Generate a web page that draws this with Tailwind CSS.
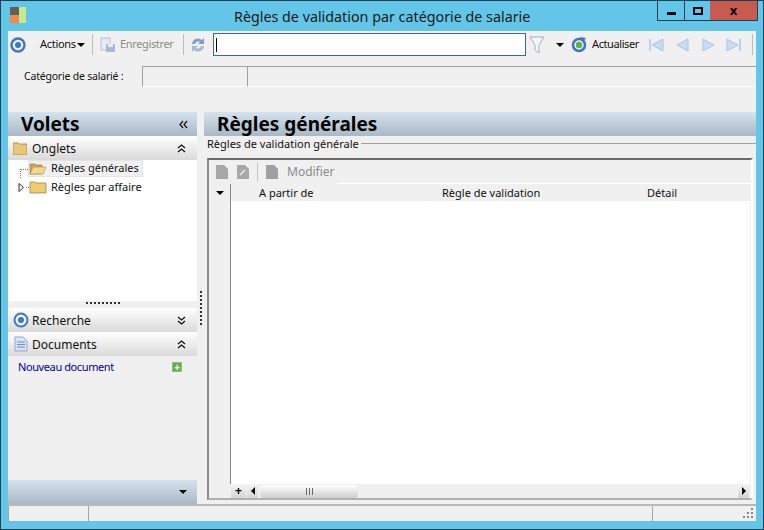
<!DOCTYPE html>
<html lang="fr">
<head>
    <meta charset="UTF-8">
    <title>Règles de validation par catégorie de salarie</title>
    <script src="https://cdn.jsdelivr.net/npm/@tailwindcss/browser@4"></script>
</head>
<body class="m-0 bg-[#63c6e8] font-['Noto_Sans','Open_Sans',sans-serif] text-[#111]">
<div class="w-[764px] h-[530px] flex flex-col border border-[#1d4257] overflow-hidden">

    <!-- title bar -->
    <div class="h-[30px] flex shrink-0 pl-[9px]">
        <svg class="mt-[6px]" width="16" height="16" viewBox="0 0 16 16">
            <rect x="0" y="0" width="9" height="8" fill="#5f5f5f"/>
            <rect x="0" y="8" width="9" height="8" fill="#f28a4e"/>
            <rect x="9" y="0" width="7" height="16" fill="#c4ea8c"/>
        </svg>
        <div class="w-[631px] pl-[208px] text-[14.3px] leading-[30px] pt-px text-[#1a1a1a]">Règles de validation par catégorie de salarie</div>
        <div class="flex h-[21px] -mt-px border border-[#1d4257]">
            <div class="w-[27px] border-r border-[#1d4257] flex items-center justify-center"><div class="w-[9px] h-[3px] mt-[5px] bg-black"></div></div>
            <div class="w-[25px] flex items-center justify-center"><div class="w-[10px] h-[8px] border-2 border-black"></div></div>
            <div class="w-[47px] bg-[#c75b50] flex items-center justify-center text-[13px] font-bold text-black">x</div>
        </div>
    </div>

    <!-- client area -->
    <div class="mx-[7px] w-[748px] h-[490px] bg-[#f0f0f0] flex flex-col text-[11px]">

        <!-- toolbar -->
        <div class="h-[27px] flex items-center pl-[2px] shrink-0">
            <svg width="16" height="16" viewBox="0 0 16 16"><circle cx="8" cy="8" r="6.5" fill="#eef3fb" stroke="#3f76c4" stroke-width="2.4"/><circle cx="8" cy="8" r="3" fill="#3f76c4"/></svg>
            <span class="ml-[14px] w-[34px] tracking-[-0.3px]">Actions</span>
            <span class="ml-[3px] border-x-[4px] border-t-[4px] border-x-transparent border-t-black"></span>
            <span class="ml-[7px] w-px h-[21px] bg-[#bdbdbd]"></span>
            <svg class="ml-[7px]" width="16" height="16" viewBox="0 0 16 16"><rect x="1" y="1" width="9" height="12" fill="#e6ebf3" stroke="#b5c0d0"/><rect x="6" y="7" width="9" height="8" fill="#a9b8d0"/><rect x="8" y="7" width="5" height="3" fill="#e6ebf3"/></svg>
            <span class="ml-[4px] w-[54px] text-[#8a8a8a] tracking-[-0.35px]">Enregistrer</span>
            <span class="ml-[9px] w-px h-[21px] bg-[#bdbdbd]"></span>
            <svg class="ml-[6px]" width="16" height="16" viewBox="0 0 16 16"><path d="M2 7 A6 6 0 0 1 12 3 L14 1 L14 7 L8 7 L10 5 A3.5 3.5 0 0 0 5 7 Z" fill="#7fa0c4"/><path d="M14 9 A6 6 0 0 1 4 13 L2 15 L2 9 L8 9 L6 11 A3.5 3.5 0 0 0 11 9 Z" fill="#a7bbd1"/></svg>
            <div class="ml-[7px] w-[313px] h-[23px] bg-white border border-[#3a6a8c] flex items-center pl-[2px]"><span class="w-px h-[14px] bg-black"></span></div>
            <svg class="ml-[3px]" width="16" height="18" viewBox="0 0 16 18"><path d="M1 1 H15 L10 9 V17 L6 14 V9 Z" fill="#f3f6f9" stroke="#9fb0c0"/></svg>
            <span class="ml-[11px] border-x-[4px] border-t-[4px] border-x-transparent border-t-black"></span>
            <svg class="ml-[7px]" width="16" height="16" viewBox="0 0 16 16"><circle cx="8" cy="8" r="6" fill="none" stroke="#3f76c4" stroke-width="2.6"/><circle cx="8" cy="8" r="3.2" fill="#5bb545"/><path d="M9 0 L15 1 L12 5 Z" fill="#3f76c4"/></svg>
            <span class="ml-[5px] w-[47px] tracking-[-0.4px]">Actualiser</span>
            <svg class="ml-[10px]" width="15" height="14" viewBox="0 0 15 14"><rect x="0" y="1" width="2" height="12" fill="#b9d2ea"/><path d="M14 1 V13 L3 7 Z" fill="#c5dcf1" stroke="#a9c6e2"/></svg>
            <svg class="ml-[12px]" width="14" height="14" viewBox="0 0 14 14"><path d="M12 1 V13 L1 7 Z" fill="#c5dcf1" stroke="#a9c6e2"/></svg>
            <svg class="ml-[11px]" width="14" height="14" viewBox="0 0 14 14"><path d="M2 1 V13 L13 7 Z" fill="#c5dcf1" stroke="#a9c6e2"/></svg>
            <svg class="ml-[11px]" width="15" height="14" viewBox="0 0 15 14"><path d="M1 1 V13 L12 7 Z" fill="#c5dcf1" stroke="#a9c6e2"/><rect x="13" y="1" width="2" height="12" fill="#b9d2ea"/></svg>
            <span class="ml-[11px] w-px h-[21px] bg-[#bdbdbd]"></span>
        </div>

        <!-- category row -->
        <div class="mt-[8px] h-[21px] flex shrink-0">
            <div class="w-[134px] pl-[16px] leading-[21px] text-[10.5px] tracking-[-0.2px]">Catégorie de salarié :</div>
            <div class="w-[105px] border border-r-0 border-t-[#a0a0a0] border-l-[#a0a0a0] border-b-white"></div>
            <div class="flex-1 border border-r-0 border-t-[#a0a0a0] border-l-[#a0a0a0] border-b-white"></div>
        </div>

        <!-- panels -->
        <div class="mt-[25px] flex flex-1 min-h-0 relative">
            <div class="w-[189px] flex flex-col shrink-0">
                <div class="h-[24px] bg-gradient-to-b from-[#d5e3ef] to-[#a9b8c6] flex items-center justify-between pl-[13px] pr-[9px] shrink-0">
                    <span class="text-[19px] font-bold text-black">Volets</span>
                    <svg width="9" height="9" viewBox="0 0 9 9" fill="none" stroke="#111" stroke-width="1.2"><path d="M4 1 L1 4.5 L4 8 M8 1 L5 4.5 L8 8"/></svg>
                </div>
                <div class="h-[24px] bg-gradient-to-b from-[#ffffff] to-[#d9d9d9] flex items-center pl-[5px] pr-[11px] shrink-0 text-[12px]">
                    <svg width="14" height="13" viewBox="0 0 14 13"><path d="M0 1 H5 L6 2 H14 V13 H0 Z" fill="#e9c878" stroke="#8f7a4a" stroke-width="0.7"/></svg>
                    <span class="ml-[5px] pt-[2px]">Onglets</span>
                    <svg class="ml-auto" width="9" height="9" viewBox="0 0 9 9" fill="none" stroke="#111" stroke-width="1.3"><path d="M1 4 L4.5 1 L8 4 M1 8 L4.5 5 L8 8"/></svg>
                </div>
                <div class="h-[141px] bg-white shrink-0">
                    <div class="flex items-center h-[17px] pl-[12px]">
                        <span class="w-[8px] h-[9px] mt-[9px] border-l border-t border-dotted border-[#777]"></span>
                        <div class="flex items-center h-[17px] bg-[#f0f0f0] border border-[#e4e4e4] pr-[3px]">
                            <svg width="18" height="13" viewBox="0 0 18 13"><path d="M1 2 H6 L7 3 H13 V12 H1 Z" fill="#c9a84f" stroke="#8f7a4a" stroke-width="0.6"/><path d="M1 12 L4 5 H17 L14 12 Z" fill="#f2d98a" stroke="#a78c4c" stroke-width="0.6"/></svg>
                            <span class="ml-[4px]">Règles générales</span>
                        </div>
                    </div>
                    <div class="flex items-center h-[18px] pl-[10px] mt-px">
                        <svg width="7" height="9" viewBox="0 0 7 9"><path d="M1 0.5 L5.5 4.5 L1 8.5 Z" fill="#fff" stroke="#333"/></svg>
                        <span class="w-[3px] ml-px border-t border-dotted border-[#777]"></span>
                        <svg width="18" height="13" viewBox="0 0 18 13"><path d="M1 1 H6 L7 2 H17 V12 H1 Z" fill="#eecb6d" stroke="#8f7a4a" stroke-width="0.7"/></svg>
                        <span class="ml-[4px]">Règles par affaire</span>
                    </div>
                </div>
                <div class="h-[7px] flex justify-center shrink-0 pt-[1px]"><span class="w-[34px] h-[2px] border-t-2 border-dotted border-[#333]"></span></div>
                <div class="h-[24px] bg-gradient-to-b from-[#ffffff] to-[#d9d9d9] flex items-center pl-[5px] pr-[11px] shrink-0 text-[12px]">
                    <svg width="16" height="16" viewBox="0 0 16 16"><circle cx="8" cy="8" r="6.5" fill="#eef3fb" stroke="#3f76c4" stroke-width="2"/><circle cx="8" cy="8" r="3" fill="#3f76c4"/></svg>
                    <span class="ml-[3px] pt-[2px]">Recherche</span>
                    <svg class="ml-auto" width="9" height="9" viewBox="0 0 9 9" fill="none" stroke="#111" stroke-width="1.3"><path d="M1 1 L4.5 4 L8 1 M1 5 L4.5 8 L8 5"/></svg>
                </div>
                <div class="h-[24px] bg-gradient-to-b from-[#ffffff] to-[#d9d9d9] flex items-center pl-[6px] pr-[11px] shrink-0 text-[12px]">
                    <svg width="14" height="16" viewBox="0 0 14 16"><path d="M1 1 H9 L13 5 V15 H1 Z" fill="#d8e4f6" stroke="#8fa9d0"/><path d="M3 6 H11 M3 8.5 H11 M3 11 H11" stroke="#6c8cc0"/></svg>
                    <span class="ml-[4px] pt-[2px]">Documents</span>
                    <svg class="ml-auto" width="9" height="9" viewBox="0 0 9 9" fill="none" stroke="#111" stroke-width="1.3"><path d="M1 4 L4.5 1 L8 4 M1 8 L4.5 5 L8 8"/></svg>
                </div>
                <div class="flex items-center h-[22px] pl-[10px] pr-[15px] shrink-0 text-[#0000a0]">
                    <span class="tracking-[-0.4px]">Nouveau document</span>
                    <span class="ml-auto w-[10px] h-[10px] bg-[#63ad4a] border border-[#8cc277] flex items-center justify-center text-white text-[10px] leading-none font-bold">+</span>
                </div>
                <div class="flex-1"></div>
                <div class="h-[24px] bg-gradient-to-b from-[#d5e3ef] to-[#a9b8c6] flex items-center justify-end pr-[10px] shrink-0">
                    <span class="border-x-[4px] border-t-[4px] border-x-transparent border-t-black"></span>
                </div>
            </div>

            <span class="absolute left-[192px] top-[179px] h-[34px] border-l-2 border-dotted border-[#333]"></span>

            <div class="ml-[7px] flex-1 flex flex-col min-w-0">
                <div class="h-[24px] bg-gradient-to-b from-[#d5e3ef] to-[#a9b8c6] pl-[13px] text-[19px] font-bold leading-[24px] text-black shrink-0">Règles générales</div>
                <div class="h-[16px] flex items-center pl-[3px] shrink-0">
                    <span>Règles de validation générale</span>
                    <span class="ml-[2px] flex-1 h-px bg-[#a0a0a0] -mt-px"></span>
                </div>
                <div class="mt-[6px] ml-[3px] w-[546px] h-[342px] border-2 border-t-[#6b6b6b] border-l-[#8a8a8a] border-b-[#b0b0b0] border-r-white flex flex-col shrink-0">
                    <div class="h-[23px] flex items-center pl-[6px] shrink-0 text-[#8a8a8a] text-[12px]">
                        <svg width="14" height="16" viewBox="0 0 14 16"><path d="M1 1 H9 L13 5 V15 H1 Z" fill="#a8a8a8"/></svg>
                        <svg class="ml-[7px]" width="14" height="16" viewBox="0 0 14 16"><path d="M1 1 H9 L13 5 V15 H1 Z" fill="#a8a8a8"/><path d="M4 11 L9 6" stroke="#eee" stroke-width="1.5"/></svg>
                        <span class="ml-[7px] w-px h-[20px] bg-[#c4c4c4]"></span>
                        <svg class="ml-[7px]" width="15" height="16" viewBox="0 0 15 16"><path d="M1 1 H9 L13 5 V15 H1 Z" fill="#a0a0a0"/></svg>
                        <span class="ml-[7px]">Modifier</span>
                    </div>
                    <div class="h-px ml-[128px] bg-white shrink-0"></div>
                    <div class="flex-1 flex min-h-0">
                        <div class="w-[22px] border-r border-[#8a8a8a] flex justify-center pt-[7px] shrink-0">
                            <span class="h-0 border-x-[4px] border-t-[4px] border-x-transparent border-t-black"></span>
                        </div>
                        <div class="flex-1 flex flex-col bg-white min-w-0 mr-px">
                            <div class="h-[17px] bg-[#f0f0f0] flex items-center shrink-0 text-[11px] pt-px">
                                <span class="ml-[28px] w-[183px]">A partir de</span>
                                <span class="w-[205px]">Règle de validation</span>
                                <span>Détail</span>
                            </div>
                            <div class="flex-1"></div>
                        </div>
                    </div>
                    <div class="h-[14px] flex items-center bg-[#f0f0f0] shrink-0 pl-[22px] pr-[2px]">
                        <div class="w-[15px] h-[14px] flex items-center justify-center text-[12px] font-bold leading-none text-black bg-gradient-to-b from-[#f5f5f5] to-[#d4d4d4]">+</div>
                        <div class="ml-[1px] w-[11px] h-[14px] flex items-center justify-center bg-gradient-to-b from-[#f5f5f5] to-[#d4d4d4]"><span class="border-y-[4px] border-r-[4px] border-y-transparent border-r-black"></span></div>
                        <div class="ml-[2px] w-[98px] h-[13px] rounded-[3px] flex items-center justify-center bg-gradient-to-b from-[#ffffff] to-[#cfcfcf]"><span class="w-[7px] h-[7px] border-x border-[#666] bg-[linear-gradient(90deg,transparent_2px,#666_2px,#666_3px,transparent_3px)]"></span></div>
                        <div class="ml-auto w-[11px] h-[14px] flex items-center justify-center bg-gradient-to-b from-[#f5f5f5] to-[#d4d4d4]"><span class="border-y-[4px] border-l-[4px] border-y-transparent border-l-black"></span></div>
                    </div>
                </div>
            </div>
        </div>

        <!-- status bar -->
        <div class="h-[17px] flex border-t-2 border-[#b8b8b8] shrink-0 relative">
            <div class="w-[81px] border-r border-[#a8a8a8] border-l"></div>
            <div class="w-[564px] border-r border-[#a8a8a8]"></div>
            <svg class="absolute right-[2px] bottom-[2px]" width="11" height="11" viewBox="0 0 11 11" fill="#8a8a8a"><rect x="8" y="0" width="2" height="2"/><rect x="4" y="4" width="2" height="2"/><rect x="8" y="4" width="2" height="2"/><rect x="0" y="8" width="2" height="2"/><rect x="4" y="8" width="2" height="2"/><rect x="8" y="8" width="2" height="2"/></svg>
        </div>
    </div>
</div>
</body>
</html>
